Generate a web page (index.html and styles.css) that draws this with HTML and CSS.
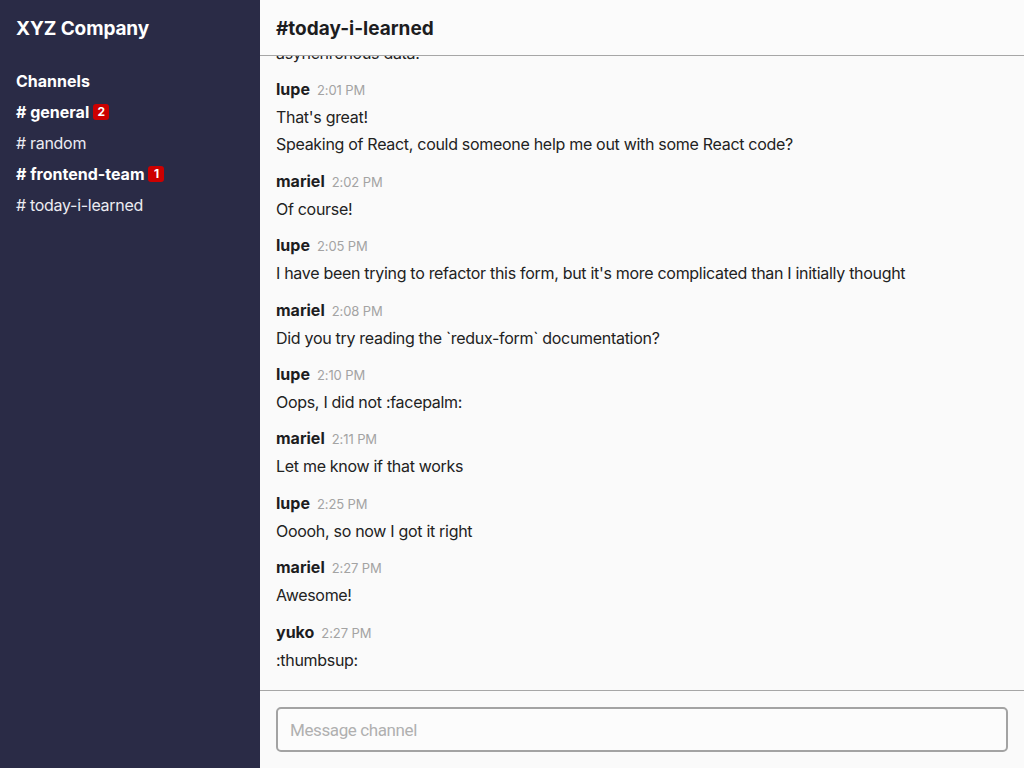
FILE: index.html
```html
<!DOCTYPE html>
<html lang="en">
<head>
<meta charset="utf-8">
<title>XYZ Company - #today-i-learned</title>
<link rel="stylesheet" href="styles.css">
</head>
<body>
<div class="app">
  <aside class="sidebar">
    <div class="workspace">XYZ Company</div>
    <div class="channels">
      <div class="channels-title">Channels</div>
      <div class="channel unread"># general<span class="badge">2</span></div>
      <div class="channel"># random</div>
      <div class="channel unread"># frontend-team<span class="badge">1</span></div>
      <div class="channel"># today-i-learned</div>
    </div>
  </aside>
  <main class="main">
    <header class="main-header">#today-i-learned</header>
    <section class="messages">
      <div class="msg">
        <div class="line">asynchronous data.</div>
      </div>
      <div class="msg">
        <div class="msg-head"><span class="user">lupe</span><span class="time">2:01 PM</span></div>
        <div class="line">That's great!</div>
        <div class="line">Speaking of React, could someone help me out with some React code?</div>
      </div>
      <div class="msg">
        <div class="msg-head"><span class="user">mariel</span><span class="time">2:02 PM</span></div>
        <div class="line">Of course!</div>
      </div>
      <div class="msg">
        <div class="msg-head"><span class="user">lupe</span><span class="time">2:05 PM</span></div>
        <div class="line">I have been trying to refactor this form, but it's more complicated than I initially thought</div>
      </div>
      <div class="msg">
        <div class="msg-head"><span class="user">mariel</span><span class="time">2:08 PM</span></div>
        <div class="line">Did you try reading the `redux-form` documentation?</div>
      </div>
      <div class="msg">
        <div class="msg-head"><span class="user">lupe</span><span class="time">2:10 PM</span></div>
        <div class="line">Oops, I did not :facepalm:</div>
      </div>
      <div class="msg">
        <div class="msg-head"><span class="user">mariel</span><span class="time">2:11 PM</span></div>
        <div class="line">Let me know if that works</div>
      </div>
      <div class="msg">
        <div class="msg-head"><span class="user">lupe</span><span class="time">2:25 PM</span></div>
        <div class="line">Ooooh, so now I got it right</div>
      </div>
      <div class="msg">
        <div class="msg-head"><span class="user">mariel</span><span class="time">2:27 PM</span></div>
        <div class="line">Awesome!</div>
      </div>
      <div class="msg">
        <div class="msg-head"><span class="user">yuko</span><span class="time">2:27 PM</span></div>
        <div class="line">:thumbsup:</div>
      </div>
    </section>
    <footer class="composer">
      <input class="composer-input" type="text" placeholder="Message channel">
    </footer>
  </main>
</div>
</body>
</html>
```

FILE: styles.css
```css
* { box-sizing: border-box; }
html, body { margin: 0; padding: 0; height: 100%; }
body {
  font-family: Inter, "Noto Sans", sans-serif;
  font-size: 16px;
  color: #1d1d1f;
  background: #fafafa;
}
.app {
  display: flex;
  height: 768px;
  overflow: hidden;
}
.sidebar {
  width: 260px;
  flex: 0 0 260px;
  background: #2a2b46;
  color: #ffffff;
}
.workspace {
  height: 55px;
  display: flex;
  align-items: center;
  padding: 2px 16px 0;
  font-size: 19px;
  font-weight: 700;
  letter-spacing: -0.1px;
}
.channels {
  padding: 10.5px 16px 0;
}
.channels-title {
  line-height: 31px;
  font-weight: 700;
}
.channel {
  line-height: 31px;
  color: #ececf2;
  display: flex;
  align-items: center;
  white-space: pre;
  letter-spacing: -0.3px;
}
.channel.unread {
  font-weight: 700;
  color: #ffffff;
  letter-spacing: 0;
}
.badge {
  display: inline-block;
  margin-left: 4px;
  background: #cc0000;
  color: #fff;
  font-size: 12px;
  font-weight: 700;
  line-height: 16px;
  min-width: 16px;
  padding: 0 4px;
  border-radius: 3px;
  text-align: center;
  letter-spacing: 0;
}
.main {
  flex: 1;
  display: flex;
  flex-direction: column;
  min-width: 0;
  background: #fafafa;
}
.main-header {
  height: 56px;
  flex: 0 0 56px;
  border-bottom: 1px solid #a6a6a6;
  display: flex;
  align-items: center;
  padding: 2px 16px 0;
  font-size: 19px;
  font-weight: 700;
  background: #fbfbfb;
}
.messages {
  flex: 1;
  min-height: 0;
  overflow: hidden;
  display: flex;
  flex-direction: column;
  justify-content: flex-end;
  padding: 0 16px 8px;
}
.msg {
  flex: 0 0 auto;
  padding-bottom: 8.4px;
}
.msg-head {
  line-height: 28px;
  height: 29px;
}
.user {
  font-weight: 700;
  color: #1d1d1f;
}
.time {
  margin-left: 7px;
  font-size: 13px;
  color: #a3a3a3;
  letter-spacing: -0.1px;
}
.line {
  line-height: 27px;
  color: #222222;
  letter-spacing: -0.3px;
}
.composer {
  flex: 0 0 78px;
  border-top: 1px solid #a6a6a6;
  padding: 16px 16px 16px;
}
.composer-input {
  width: 100%;
  height: 45px;
  border: 2px solid #a3a3a3;
  border-radius: 5px;
  background: #fcfcfc;
  padding: 0 12px;
  font-family: Roboto, Inter, sans-serif;
  font-size: 17px;
  letter-spacing: -0.4px;
  color: #222;
  outline: none;
}
.composer-input::placeholder {
  color: #b0b0b0;
}
```
